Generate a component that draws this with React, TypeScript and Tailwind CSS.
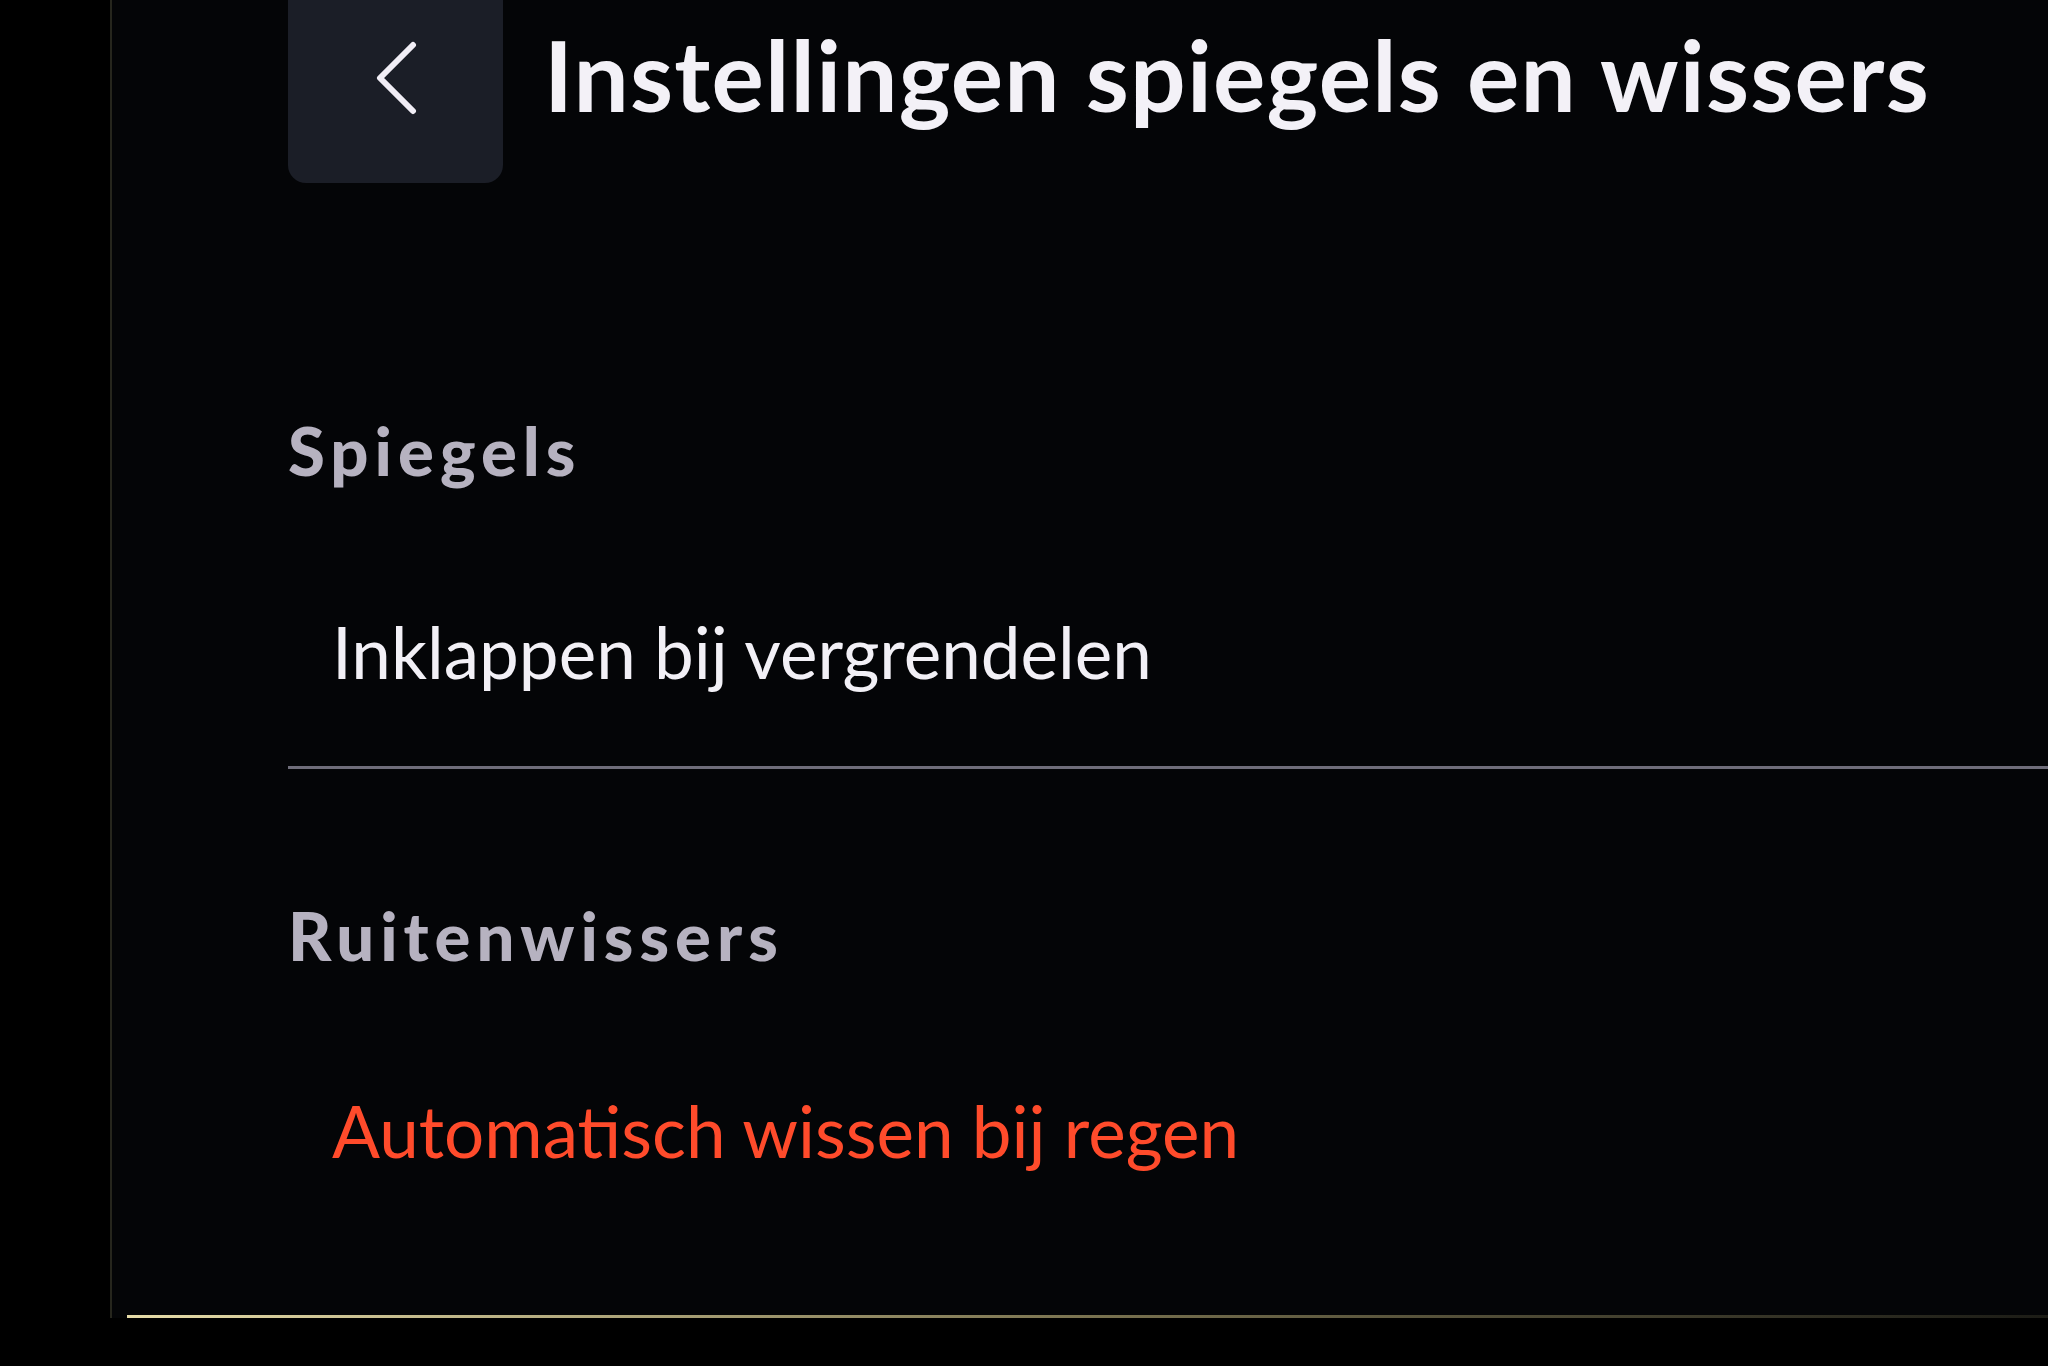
import React from 'react';

const BackButton: React.FC = () => (
  <button className="w-[215px] h-[183px] shrink-0 rounded-b-[18px] bg-[#1b1e27] flex items-start justify-center pt-[41px]">
    <svg width="48" height="74" viewBox="0 0 48 74" fill="none">
      <path d="M41 4 L8 37 L41 70" stroke="#f1eef6" strokeWidth="6" strokeLinecap="round" strokeLinejoin="round" />
    </svg>
  </button>
);

const SettingsScreen: React.FC = () => {
  return (
    <div className="w-[2048px] h-[1366px] bg-black overflow-hidden" style={{ fontFamily: 'Lato, "Open Sans", sans-serif' }}>
      <div className="ml-[110px] h-[1318px] border-l-[2px] border-[#26261d] bg-[#040507] flex flex-col">
        <div className="flex-1 pl-[176px]">
          {/* header */}
          <div className="flex items-start h-[183px]">
            <BackButton />
            <h1 className="ml-[41px] mt-[25px] text-[98px] leading-none font-bold text-[#f3f1f7] tracking-[1.2px] whitespace-nowrap">
              Instellingen spiegels en wissers
            </h1>
          </div>

          {/* Spiegels */}
          <h2 className="mt-[234px] text-[67px] leading-none font-black tracking-[6px] text-[#b6b2c0]">Spiegels</h2>
          <p className="mt-[132px] pl-[44px] text-[71px] leading-none font-normal text-[#f2f0f6]">
            Inklappen bij vergrendelen
          </p>
          <div className="mt-[79px] h-[3px] bg-[#6f6d7a]" />

          {/* Ruitenwissers */}
          <h2 className="mt-[133px] text-[67px] leading-none font-black tracking-[6px] text-[#b6b2c0]">Ruitenwissers</h2>
          <p className="mt-[126px] pl-[44px] text-[71px] leading-none font-normal text-[#ff4b2b]">
            Automatisch wissen bij regen
          </p>
        </div>
        <div className="h-[3px] ml-[15px] bg-gradient-to-r from-[#e6dca8] via-[#7a7350] to-[#1c1c16]" />
      </div>
    </div>
  );
};

export default function App() {
  return <SettingsScreen />;
}
